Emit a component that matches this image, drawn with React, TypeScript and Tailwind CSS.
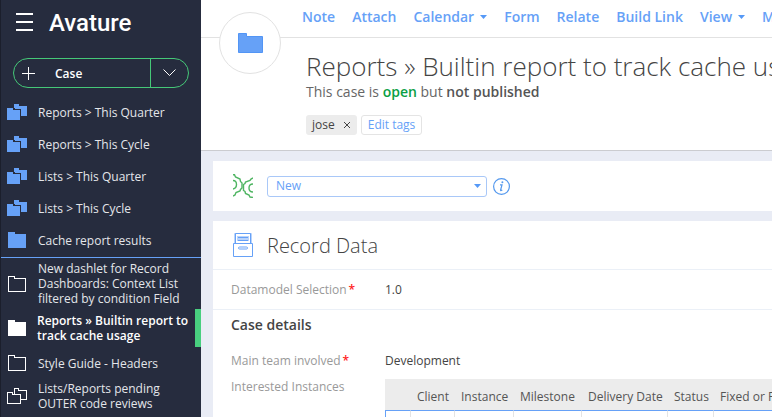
import React from 'react';

type FolderKind = 'stack' | 'solid' | 'outline' | 'active' | 'outlineStack';

function FolderIcon({ kind }: { kind: FolderKind }) {
  if (kind === 'stack') {
    return (
      <svg width="20" height="16" viewBox="0 0 20 16" className="shrink-0" shapeRendering="crispEdges" aria-hidden="true">
        <path d="M7 0h5v2h8v10h-6V5H8V4H7z" fill="#66a1f7" />
        <path d="M0 4h6v2h7v10H0z" fill="#66a1f7" />
      </svg>
    );
  }
  if (kind === 'outlineStack') {
    return (
      <svg width="20" height="16" viewBox="0 0 20 16" className="shrink-0" shapeRendering="crispEdges" aria-hidden="true">
        <path d="M7.5 6V.5h4v2h8v9h-6" fill="none" stroke="#fff" />
        <path d="M.5 4.5h5v2h8v9H.5z" fill="none" stroke="#fff" />
      </svg>
    );
  }
  if (kind === 'outline') {
    return (
      <svg width="18" height="16" viewBox="0 0 18 16" className="mx-px shrink-0" shapeRendering="crispEdges" aria-hidden="true">
        <path d="M.5.5h6v2h11v13H.5z" fill="none" stroke="#fff" />
      </svg>
    );
  }
  const fill = kind === 'active' ? '#ffffff' : '#66a1f7';
  return (
    <svg width="18" height="16" viewBox="0 0 18 16" className="mx-px shrink-0" shapeRendering="crispEdges" aria-hidden="true">
      <path d="M0 0h7v2h11v14H0z" fill={fill} />
    </svg>
  );
}

function Caret() {
  return (
    <svg width="7" height="4" viewBox="0 0 7 4" className="shrink-0" aria-hidden="true">
      <path d="M0 0h7L3.5 4z" fill="#5599f7" />
    </svg>
  );
}

const pinned: { label: string; kind: FolderKind }[] = [
  { label: 'Reports > This Quarter', kind: 'stack' },
  { label: 'Reports > This Cycle', kind: 'stack' },
  { label: 'Lists > This Quarter', kind: 'stack' },
  { label: 'Lists > This Cycle', kind: 'stack' },
  { label: 'Cache report results', kind: 'solid' },
];

const recent: { label: string; kind: FolderKind }[] = [
  { label: 'New dashlet for Record Dashboards: Context List filtered by condition Field', kind: 'outline' },
  { label: 'Reports » Builtin report to track cache usage', kind: 'active' },
  { label: 'Style Guide - Headers', kind: 'outline' },
  { label: 'Lists/Reports pending OUTER code reviews', kind: 'outlineStack' },
];

const actions = [
  { label: 'Note' },
  { label: 'Attach' },
  { label: 'Calendar', menu: true },
  { label: 'Form' },
  { label: 'Relate' },
  { label: 'Build Link' },
  { label: 'View', menu: true },
  { label: 'More', menu: true },
];

const columns = [
  { label: 'Client', width: 'w-[44px]' },
  { label: 'Instance', width: 'w-[59px]' },
  { label: 'Milestone', width: 'w-[68px]' },
  { label: 'Delivery Date', width: 'w-[86px]' },
  { label: 'Status', width: 'w-[46px]' },
  { label: 'Fixed or Planned', width: 'w-[120px]' },
];

function Sidebar() {
  return (
    <aside className="w-[201px] shrink-0 border-l border-[#1b1f2c] bg-[#262c3e] text-[12px] leading-[15px] text-[#e4e6ea]">
      <div className="flex h-[46px] items-center gap-4 pl-[15px]">
        <button type="button" aria-label="Menu" className="flex w-[17px] flex-col gap-[6px] pb-[3px]">
          <span className="h-[2px] w-full bg-white" />
          <span className="h-[2px] w-full bg-white" />
          <span className="h-[2px] w-full bg-white" />
        </button>
        <span className="font-['Roboto',sans-serif] text-[24px] font-medium leading-[30px] text-white">Avature</span>
      </div>
      <div className="mt-3 ml-3 flex h-[30px] w-[176px] rounded-full border border-[#45c878] text-white">
        <button type="button" className="flex flex-1 items-center gap-5 border-r border-[#45c878] pl-2 font-semibold">
          <svg width="13" height="13" viewBox="0 0 13 13" shapeRendering="crispEdges" aria-hidden="true">
            <path d="M6.5 0v13M0 6.5h13" stroke="#fff" />
          </svg>
          Case
        </button>
        <button type="button" aria-label="More types" className="flex w-[37px] items-center justify-center">
          <svg width="13" height="8" viewBox="0 0 13 8" aria-hidden="true">
            <path d="M.5.5l6 6 6-6" fill="none" stroke="#fff" />
          </svg>
        </button>
      </div>
      <ul className="mt-2 border-b border-[#66a1f7] pb-px">
        {pinned.map((item) => (
          <li key={item.label}>
            <a href="#" className="flex h-8 items-center gap-[11px] pl-[6px]">
              <FolderIcon kind={item.kind} />
              {item.label}
            </a>
          </li>
        ))}
      </ul>
      <ul>
        {recent.map((item) => (
          <li key={item.label}>
            <a
              href="#"
              className={
                item.kind === 'active'
                  ? 'flex items-center gap-[10px] border-r-[6px] border-[#48cf7f] py-1 pl-[6px] font-semibold text-white'
                  : item.kind === 'outline'
                    ? 'flex min-h-8 items-center gap-[11px] py-[3px] pr-4 pl-[6px]'
                    : 'flex min-h-[34px] items-center gap-[11px] pr-8 pl-[6px]'
              }
            >
              <FolderIcon kind={item.kind} />
              <span>{item.label}</span>
            </a>
          </li>
        ))}
      </ul>
    </aside>
  );
}

function RecordHeader() {
  return (
    <header className="relative border-b border-[#cbccd0] bg-white">
      <nav className="flex h-[38px] items-center gap-[17px] overflow-hidden border-b border-[#e2e2e2] pb-1 pl-[101px]">
        {actions.map((action) => (
          <button
            key={action.label}
            type="button"
            className="flex shrink-0 items-center gap-[6px] text-[14px] leading-5 font-semibold text-[#66a1f7]"
          >
            {action.label}
            {action.menu && <Caret />}
          </button>
        ))}
      </nav>
      <div className="absolute top-3 left-[18px] flex size-[62px] items-center justify-center rounded-full border border-[#e2e2e2] bg-white">
        <svg width="25" height="20" viewBox="0 0 25 20" aria-hidden="true">
          <path d="M.5.5h8v3h16v16H.5z" fill="#66a1f7" stroke="#5295f5" />
        </svg>
      </div>
      <div className="overflow-hidden pt-[10px] pb-[15px] pl-[105px] whitespace-nowrap">
        <h1 className="text-[26px] leading-9 font-light text-[#444]">Reports » Builtin report to track cache usage</h1>
        <p className="text-[14px] leading-4 text-[#666]">
          This case is <strong className="font-semibold text-[#0aa045]">open</strong> but{' '}
          <strong className="font-semibold text-[#555]">not published</strong>
        </p>
        <div className="mt-[15px] flex h-5 gap-1 text-[12px] leading-[18px]">
          <span className="flex items-center gap-2 rounded-[3px] bg-[#ececec] px-[6px] text-[#444]">
            jose
            <button type="button" aria-label="Remove tag jose">
              <svg width="8" height="8" viewBox="0 0 8 8" aria-hidden="true">
                <path d="M1 1l6 6M7 1L1 7" stroke="#444" />
              </svg>
            </button>
          </span>
          <button type="button" className="rounded-[3px] border border-[#e4e4e4] px-[6px] text-[#66a1f7]">
            Edit tags
          </button>
        </div>
      </div>
    </header>
  );
}

function WorkflowCard() {
  return (
    <section className="flex h-[50px] items-center bg-white pl-5">
      <svg width="20" height="24" viewBox="0 0 20 24" fill="none" stroke="#4fb562" strokeWidth="1.4" aria-hidden="true">
        <path d="M0 .7h1.500L2.500 3 7 5l.5 2.500L9 9v5l-1.500 1.500L7 17l-4 1.500L2 21l-2 1" />
        <path d="M0 6.500c2 0 3.500 1.500 3.500 4S2 14.500 0 15" />
        <path d="M20 4l-2 1-1 1.500-4.500 1.500L12 9.500l-1.500 1v6l1.500 1 .5 2 3.500 1.500L17 23l3 .5" />
        <path d="M20 10c-2.500 0-4 1.500-4 4s1.500 4 4 4" />
      </svg>
      <label htmlFor="step" className="sr-only">Workflow step</label>
      <div className="relative ml-[14px] w-[220px]">
        <select
          id="step"
          className="block h-[21px] w-full appearance-none rounded-[3px] border border-[#a9c8f8] bg-white pl-2 text-[12px] leading-[18px] text-[#66a1f7]"
        >
          <option>New</option>
        </select>
        <span className="pointer-events-none absolute inset-y-0 right-[6px] flex items-center">
          <Caret />
        </span>
      </div>
      <button type="button" aria-label="Information" className="ml-[6px]">
        <svg width="17" height="17" viewBox="0 0 17 17" fill="none" aria-hidden="true">
          <circle cx="8.5" cy="8.5" r="7.9" stroke="#5599ee" strokeWidth="1.2" />
          <path d="M7 6.800h2L7.600 12q-.2.800.7.500l1-.6" stroke="#5599ee" strokeWidth="1.2" />
          <circle cx="9.400" cy="4.300" r="1" fill="#5599ee" />
        </svg>
      </button>
    </section>
  );
}

function FieldName({ children, required }: { children: React.ReactNode; required?: boolean }) {
  return (
    <dt className="flex gap-[2px] text-[#999]">
      <span>{children}</span>
      {required && <span className="font-semibold text-[#f22]">*</span>}
    </dt>
  );
}

function RecordCard() {
  return (
    <section className="mt-[10px] flex-1 bg-white">
      <div className="flex h-[49px] items-center gap-[14px] border-b border-[#ebf0f7] pl-5">
        <svg width="20" height="24" viewBox="0 0 20 24" fill="none" stroke="#66a1f7" aria-hidden="true">
          <path d="M1.5 10V.5h17V10" stroke="#b9d3fb" />
          <path d="M2.5 10V.5h15V10M.5 10.5h19v13H.5z" />
          <path d="M4 3h12v5H4z" fill="#b9d3fb" stroke="none" />
          <path d="M5 4.500h10M5 7.500h10" />
          <rect x="5.5" y="14" width="9" height="2" rx="1" />
        </svg>
        <h2 className="pt-px text-[20px] leading-7 font-light text-[#444]">Record Data</h2>
      </div>
      <dl className="grid h-10 grid-cols-[154px_minmax(0,1fr)] items-center border-b border-[#ebf0f7] pl-[18px] text-[12px] leading-4">
        <FieldName required>Datamodel Selection</FieldName>
        <dd className="text-[#444]">1.0</dd>
      </dl>
      <h3 className="pt-[5px] pl-[18px] text-[14px] leading-5 font-semibold text-[#444]">Case details</h3>
      <dl className="mt-[18px] grid grid-cols-[154px_minmax(0,1fr)] gap-y-[10px] pl-[18px] text-[12px] leading-4 text-[#444]">
        <FieldName required>Main team involved</FieldName>
        <dd>Development</dd>
        <FieldName>Interested Instances</FieldName>
        <dd className="overflow-hidden">
          <table className="w-[449px] table-fixed border-separate border-spacing-0 text-left whitespace-nowrap">
            <thead className="bg-[#ececec] text-[#555]">
              <tr className="h-[31px]">
                <th scope="col" className="w-[26px]" aria-label="Select" />
                {columns.map((column) => (
                  <th key={column.label} scope="col" className={`${column.width} pt-1 pl-[6px] font-normal`}>
                    {column.label}
                  </th>
                ))}
              </tr>
            </thead>
            <tbody>
              <tr className="h-[30px]">
                <td className="border-x border-t border-t-[#66a1f7] border-r-[#e4e4e4] border-l-[#66a1f7]" />
                {columns.map((column) => (
                  <td key={column.label} className="border-t border-r border-t-[#66a1f7] border-r-[#e4e4e4]" />
                ))}
              </tr>
            </tbody>
          </table>
        </dd>
      </dl>
    </section>
  );
}

export default function App() {
  return (
    <div className="flex h-screen overflow-hidden bg-[#e9ecf5] font-['Open_Sans','Noto_Sans',sans-serif]">
      <Sidebar />
      <main className="flex min-w-0 flex-1 flex-col">
        <RecordHeader />
        <div className="flex flex-1 flex-col pt-[10px] pl-3">
          <WorkflowCard />
          <RecordCard />
        </div>
      </main>
    </div>
  );
}
